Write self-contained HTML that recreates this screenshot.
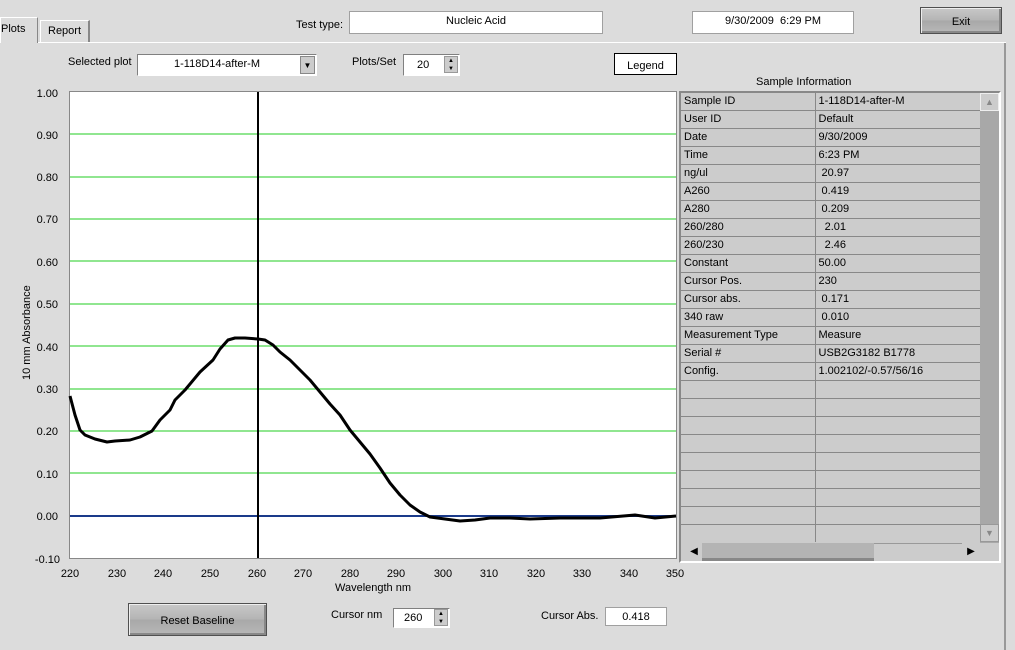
<!DOCTYPE html>
<html><head><style>
body{margin:0;width:1015px;height:650px;background:#dcdcdc;font-family:"Liberation Sans",sans-serif;font-size:11px;color:#000;position:relative;overflow:hidden}
.a{position:absolute}
.box{position:absolute;background:#fff;border:1px solid #a0a0a0;box-sizing:border-box;text-align:center}
.btn{position:absolute;background:linear-gradient(#c8c8c8,#b4b4b4 50%,#a8a8a8 51%,#b8b8b8);border:1px solid #505050;box-shadow:inset 1px 1px #eee,inset -2px -2px #888;box-sizing:border-box;text-align:center}
table{border-collapse:collapse}
td{height:17px;border-bottom:1px solid #888;padding:0 0 0 3px;font-size:11px;white-space:nowrap;line-height:17px}
td.l{border-right:1px solid #888}
</style></head><body>
<div class="a" style="left:0;top:17px;width:38px;height:26px;background:#dcdcdc;border:1px solid #fff;border-bottom:none;border-right:1px solid #888;box-sizing:border-box;padding:5px 0 0 0">Plots</div>
<div class="a" style="left:40px;top:20px;width:50px;height:22px;border:1px solid #fff;border-right:2px solid #888;border-bottom:none;box-sizing:border-box;padding:4px 0 0 7px">Report</div>
<div class="a" style="left:38px;top:42px;width:968px;height:1px;background:#fff"></div>
<div class="a" style="left:1004px;top:43px;width:2px;height:607px;background:#999"></div>
<div class="a" style="left:296px;top:19px">Test type:</div>
<div class="box" style="left:349px;top:11px;width:254px;height:23px;padding-top:3px">Nucleic Acid</div>
<div class="box" style="left:692px;top:11px;width:162px;height:23px;padding-top:3px">9/30/2009&nbsp; 6:29 PM</div>
<div class="btn" style="left:920px;top:7px;width:82px;height:27px;padding-top:8px">Exit</div>
<div class="a" style="left:68px;top:56px">Selected plot</div>
<div class="box" style="left:137px;top:54px;width:180px;height:22px;border-color:#808080 #fff #fff #808080;border-width:1px;padding-top:3px;text-align:left;padding-left:36px">1-118D14-after-M</div>
<div class="a" style="left:300px;top:56px;width:15px;height:18px;background:#ccc;border:1px solid #888;box-sizing:border-box;text-align:center;font-size:8px;line-height:17px">▼</div>
<div class="a" style="left:352px;top:56px">Plots/Set</div>
<div class="box" style="left:403px;top:54px;width:57px;height:22px;border-color:#808080 #fff #fff #808080;text-align:left;padding:4px 0 0 13px">20</div>
<div class="a" style="left:444px;top:56px;width:14px;height:17px;background:#ccc;border:1px solid #999;box-sizing:border-box;font-size:6px;text-align:center;line-height:8px">▲<br>▼</div>
<div class="a" style="left:614px;top:53px;width:63px;height:22px;background:#fff;border:1px solid #000;box-sizing:border-box;text-align:center;padding-top:6px">Legend</div>
<div class="a" style="left:756px;top:76px">Sample Information</div>
<svg class="a" style="left:0;top:80px" width="690" height="520" font-family="Liberation Sans" font-size="11">
<rect x="69.5" y="11.5" width="607" height="467" fill="#fff" stroke="#888"/>
<g stroke="#22cc22" stroke-width="1">
<line x1="70" x2="676" y1="54" y2="54"/><line x1="70" x2="676" y1="97" y2="97"/><line x1="70" x2="676" y1="139" y2="139"/><line x1="70" x2="676" y1="181" y2="181"/><line x1="70" x2="676" y1="224" y2="224"/><line x1="70" x2="676" y1="266" y2="266"/><line x1="70" x2="676" y1="309" y2="309"/><line x1="70" x2="676" y1="351" y2="351"/><line x1="70" x2="676" y1="393" y2="393"/>
</g>
<line x1="70" x2="676" y1="436" y2="436" stroke="#1a3a8a" stroke-width="2"/>
<line x1="258" x2="258" y1="12" y2="478" stroke="#000" stroke-width="2"/>
<polyline fill="none" stroke="#000" stroke-width="3" stroke-linejoin="round" points="70,316 75,335 80,350 85,355 95,359 107,362 115,361 130,360 140,357 152,351 160,340 170,330 175,320 185,310 200,292 213,280 220,269 228,260 235,258 245,258 258,259 265,260 273,265 280,272 290,280 300,290 310,300 320,312 330,324 340,335 350,350 360,362 370,374 380,388 390,403 400,415 410,425 420,432 430,437 445,439 460,441 475,440 490,438 510,438 530,439 560,438 600,438 635,435 655,438 676,436"/>
<g text-anchor="end" fill="#000">
<text x="58" y="17">1.00</text><text x="58" y="59">0.90</text><text x="58" y="101">0.80</text><text x="58" y="143">0.70</text><text x="58" y="186">0.60</text><text x="58" y="228">0.50</text><text x="58" y="271">0.40</text><text x="58" y="313">0.30</text><text x="58" y="355">0.20</text><text x="58" y="398">0.10</text><text x="58" y="440">0.00</text><text x="60" y="483">-0.10</text>
</g>
<text transform="translate(30,300) rotate(-90)" font-size="11">10 mm Absorbance</text>
<g text-anchor="middle">
<text x="70" y="497">220</text><text x="117" y="497">230</text><text x="163" y="497">240</text><text x="210" y="497">250</text><text x="257" y="497">260</text><text x="303" y="497">270</text><text x="350" y="497">280</text><text x="396" y="497">290</text><text x="443" y="497">300</text><text x="489" y="497">310</text><text x="536" y="497">320</text><text x="582" y="497">330</text><text x="629" y="497">340</text><text x="675" y="497">350</text>
<text x="373" y="511">Wavelength nm</text>
</g>
</svg>
<div class="a" style="left:679px;top:91px;width:322px;height:472px;background:#ccc;border:2px solid;border-color:#888 #fff #fff #888;box-sizing:border-box"></div>
<table class="a" style="left:681px;top:93px;width:299px;background:#ccc">
<colgroup><col style="width:134px"><col></colgroup>
<tr><td class="l">Sample ID</td><td>1-118D14-after-M</td></tr>
<tr><td class="l">User ID</td><td>Default</td></tr>
<tr><td class="l">Date</td><td>9/30/2009</td></tr>
<tr><td class="l">Time</td><td>6:23 PM</td></tr>
<tr><td class="l">ng/ul</td><td>&nbsp;20.97</td></tr>
<tr><td class="l">A260</td><td>&nbsp;0.419</td></tr>
<tr><td class="l">A280</td><td>&nbsp;0.209</td></tr>
<tr><td class="l">260/280</td><td>&nbsp;&nbsp;2.01</td></tr>
<tr><td class="l">260/230</td><td>&nbsp;&nbsp;2.46</td></tr>
<tr><td class="l">Constant</td><td>50.00</td></tr>
<tr><td class="l">Cursor Pos.</td><td>230</td></tr>
<tr><td class="l">Cursor abs.</td><td>&nbsp;0.171</td></tr>
<tr><td class="l">340 raw</td><td>&nbsp;0.010</td></tr>
<tr><td class="l">Measurement Type</td><td>Measure</td></tr>
<tr><td class="l">Serial #</td><td>USB2G3182 B1778</td></tr>
<tr><td class="l">Config.</td><td>1.002102/-0.57/56/16</td></tr>
<tr><td class="l"></td><td></td></tr>
<tr><td class="l"></td><td></td></tr>
<tr><td class="l"></td><td></td></tr>
<tr><td class="l"></td><td></td></tr>
<tr><td class="l"></td><td></td></tr>
<tr><td class="l"></td><td></td></tr>
<tr><td class="l"></td><td></td></tr>
<tr><td class="l"></td><td></td></tr>
<tr><td class="l" style="border-bottom:none"></td><td style="border-bottom:none"></td></tr>
</table>
<div class="a" style="left:980px;top:93px;width:19px;height:450px;background:#a8a8a8"></div>
<div class="a" style="left:980px;top:93px;width:19px;height:18px;background:#ccc;border:1px solid #eee;box-sizing:border-box;color:#888;font-size:9px;text-align:center;line-height:17px">▲</div>
<div class="a" style="left:980px;top:524px;width:19px;height:18px;background:#ccc;border:1px solid #999;box-sizing:border-box;color:#888;font-size:9px;text-align:center;line-height:17px">▼</div>
<div class="a" style="left:686px;top:543px;width:294px;height:18px;background:#999"></div>
<div class="a" style="left:702px;top:543px;width:172px;height:18px;background:#b4b4b4;border-bottom:3px solid #888;box-sizing:border-box"></div>
<div class="a" style="left:686px;top:543px;width:16px;height:18px;background:#ccc;font-size:10px;line-height:18px;text-align:center">◀</div>
<div class="a" style="left:874px;top:543px;width:88px;height:18px;background:#ccc;border-top:1px solid #999;box-sizing:border-box"></div>
<div class="a" style="left:962px;top:543px;width:18px;height:18px;background:#ccc;font-size:10px;line-height:18px;text-align:center">▶</div>
<div class="btn" style="left:128px;top:603px;width:139px;height:33px;padding-top:11px">Reset Baseline</div>
<div class="a" style="left:331px;top:609px">Cursor nm</div>
<div class="box" style="left:393px;top:608px;width:57px;height:20px;border-color:#808080 #fff #fff #808080;text-align:left;padding:3px 0 0 10px">260</div>
<div class="a" style="left:434px;top:609px;width:14px;height:17px;background:#ccc;border:1px solid #999;box-sizing:border-box;font-size:6px;text-align:center;line-height:8px">▲<br>▼</div>
<div class="a" style="left:541px;top:610px">Cursor Abs.</div>
<div class="box" style="left:605px;top:607px;width:62px;height:19px;padding-top:3px">0.418</div>
</body></html>
